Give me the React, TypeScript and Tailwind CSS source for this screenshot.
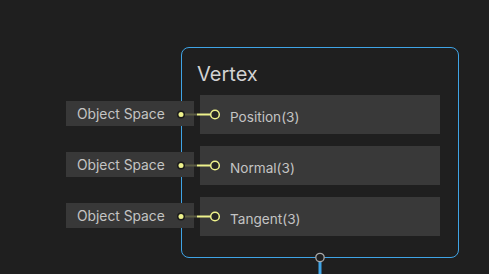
import React from "react";

const inputs = [
	{ label: "Object Space", port: "Position(3)" },
	{ label: "Object Space", port: "Normal(3)" },
	{ label: "Object Space", port: "Tangent(3)" },
];

function Connector() {
	return (
		<svg
			className="absolute left-[-25px] top-[10px] z-10 overflow-visible"
			width="46"
			height="19"
			viewBox="0 0 46 19"
		>
			<line x1="10" y1="9.5" x2="22" y2="9.5" stroke="#5c5d44" strokeWidth="2" />
			<line x1="22" y1="9.5" x2="36" y2="9.5" stroke="#eef28c" strokeWidth="2" />
			<circle cx="6" cy="9.5" r="4" fill="#1b1b1b" />
			<circle cx="6" cy="9.5" r="2.5" fill="#eef28c" />
			<circle cx="40" cy="9.5" r="4.3" fill="#262626" stroke="#eef28c" strokeWidth="1.5" />
		</svg>
	);
}

export default function App() {
	return (
		<div
			className="relative w-[489px] h-[274px] overflow-hidden bg-[#1f1f1f]"
			style={{ fontFamily: "Inter, 'Noto Sans', sans-serif" }}
		>
			<div className="absolute left-[181px] top-[47px] w-[278px] h-[211px] rounded-lg border border-[#3fa4e6] bg-[#1f1f1f]">
				<div className="h-[47px] pl-[15px] pt-[14px] text-[20px] leading-6 text-[#d2d2d2]">
					Vertex
				</div>

				<div className="flex flex-col gap-[12px] pl-[18px]">
					{inputs.map((item) => (
						<div
							key={item.port}
							className="relative w-[240px] h-[39px] bg-[#393939] pl-[30px] pt-[14px] text-[13.6px] leading-4 text-[#c4c4c4]"
						>
							<div className="absolute right-[calc(100%+6px)] top-[6px] h-[25px] w-[128px] bg-[#383838] pl-[11px] pt-[5px] whitespace-nowrap text-[13.8px] text-[#c4c4c4]">
								{item.label}
							</div>
							<Connector />
							{item.port}
						</div>
					))}
				</div>

				<svg
					className="absolute left-[131px] top-[calc(100%-5px)]"
					width="14"
					height="30"
					viewBox="0 0 14 30"
				>
					<line x1="7" y1="9" x2="7" y2="30" stroke="#3fa4e6" strokeWidth="3" />
					<circle cx="7" cy="5.5" r="4.2" fill="#1f1f1f" stroke="#a9a9a9" strokeWidth="1.3" />
				</svg>
			</div>
		</div>
	);
}
